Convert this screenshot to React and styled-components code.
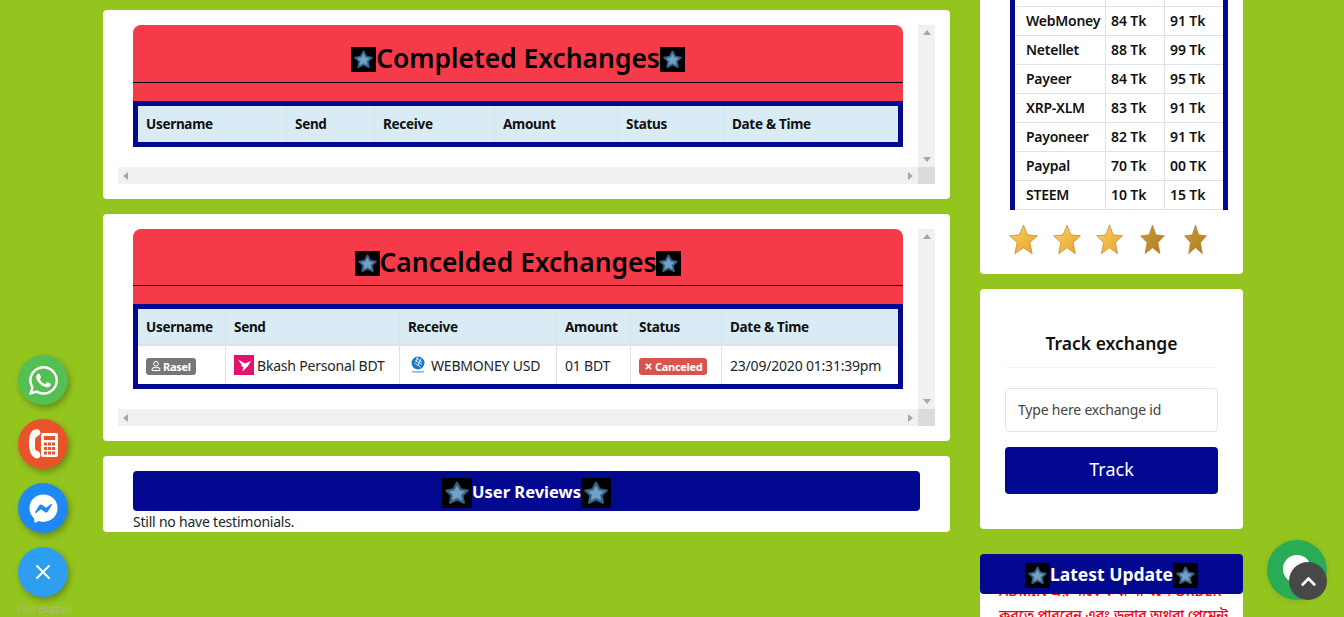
import React, { useId } from "react";
import styled, { createGlobalStyle } from "styled-components";
import { FaWhatsapp, FaFacebookMessenger, FaRegUser, FaTimes, FaChevronUp } from "react-icons/fa";
import { X } from "lucide-react";

const GREEN = "#94c51f";
const NAVY = "#020890";
const RED = "#f53b4a";
const FONT = '"Noto Sans", "Open Sans", sans-serif';

const completedCols = [149, 88, 120, 123, 106, 174];
const canceledCols = [88, 174, 157, 74, 91, 176];
const headings = ["Username", "Send", "Receive", "Amount", "Status", "Date & Time"];

const rates = [
    ["\u00a0", "", ""],
    ["WebMoney", "84 Tk", "91 Tk"],
    ["Netellet", "88 Tk", "99 Tk"],
    ["Payeer", "84 Tk", "95 Tk"],
    ["XRP-XLM", "83 Tk", "91 Tk"],
    ["Payoneer", "82 Tk", "91 Tk"],
    ["Paypal", "70 Tk", "00 TK"],
    ["STEEM", "10 Tk", "15 Tk"],
];

const STAR = "50,8 64,35 94,40 72,60 78,90 50,76 22,90 28,60 6,40 36,35";

function GlowStar({ size }) {
    return (
        <StarBox $size={size} viewBox="0 0 100 100">
            <polygon points={STAR} fill="#3f7199" stroke="#336186" strokeWidth="10" strokeLinejoin="round" />
            <polygon points={STAR} fill="#76a0c2" stroke="#5f8eb2" strokeWidth="4" strokeLinejoin="round" transform="translate(13 14) scale(.74)" />
        </StarBox>
    );
}

function GoldStar({ width, dark }) {
    const id = useId();
    return (
        <svg width={width} height="31" viewBox="0 0 100 100" preserveAspectRatio="none">
            <defs>
                <linearGradient id={id} x1="0" y1="0" x2="1" y2="1">
                    <stop offset="0" stopColor={dark ? "#c79a3a" : "#f8d071"} />
                    <stop offset="1" stopColor={dark ? "#b07f1c" : "#eaa31c"} />
                </linearGradient>
            </defs>
            <polygon points="50,3 64,35 98,38 72,60 80,96 50,77 20,96 28,60 2,38 36,35" fill={`url(#${id})`} stroke="#a9782a" strokeWidth="2" strokeLinejoin="round" />
        </svg>
    );
}

function Bkash() {
    return (
        <BrandIcon viewBox="0 0 20 20">
            <rect width="20" height="20" fill="#e2136e" />
            <path d="M4 4.5l7 4 6-2.5-3 5-5.5 5.5.8-4.5-3-1.5 2 .2z" fill="#fff" />
        </BrandIcon>
    );
}

function WebMoney() {
    return (
        <BrandIcon viewBox="0 0 20 20">
            <circle cx="10" cy="8" r="6.5" fill="#1a78c2" />
            <path d="M8 3l6 4M7 5.5l7 4M6.5 8l6 4M10 2l-2 5M13 3.5l-3 7" stroke="#fff" strokeWidth=".8" />
            <rect x="4" y="16" width="12" height="1.6" fill="#8cb6d8" />
        </BrandIcon>
    );
}

function PhoneDesk() {
    return (
        <svg width="32" height="32" viewBox="0 0 32 32">
            <path d="M7 2c-3 1-5 5-5 13s2 13 6 15c2 1 4 0 5-1 1-2 0-5-2-6-2 0-3-1-3-4V12c0-2 1-3 3-4 2-1 3-3 2-5-1-2-4-2-6-1z" fill="#fff" />
            <rect x="14" y="5" width="17" height="24" rx="2" fill="#fff" />
            <rect x="17" y="8" width="11" height="4" fill="#e9532a" />
            <g fill="#e9532a">
                <rect x="17" y="14.5" width="3" height="3" />
                <rect x="21" y="14.5" width="3" height="3" />
                <rect x="25" y="14.5" width="3" height="3" />
                <rect x="17" y="19" width="3" height="3" />
                <rect x="21" y="19" width="3" height="3" />
                <rect x="25" y="19" width="3" height="3" />
                <rect x="17" y="23.5" width="3" height="3" />
                <rect x="21" y="23.5" width="3" height="3" />
                <rect x="25" y="23.5" width="3" height="3" />
            </g>
        </svg>
    );
}

function ExchangePanel({ title, cols, titleHeight, headHeight, children }) {
    return (
        <ScrollArea>
            <ScrollContent>
                <RedPanel>
                    <PanelTitle $h={titleHeight}>
                        <GlowStar size={25} />
                        {title}
                        <GlowStar size={25} />
                    </PanelTitle>
                </RedPanel>
                <ExchangeTable>
                    <colgroup>
                        {cols.map((w, i) => (
                            <col key={i} style={{ width: w }} />
                        ))}
                    </colgroup>
                    <thead>
                        <tr>
                            {headings.map((h) => (
                                <HeadCell key={h} $h={headHeight} $ruled={Boolean(children)}>
                                    {h}
                                </HeadCell>
                            ))}
                        </tr>
                    </thead>
                    {children && <tbody>{children}</tbody>}
                </ExchangeTable>
            </ScrollContent>
            <VBar>
                <Arrow $dir="up" />
                <Arrow $dir="down" />
            </VBar>
            <HBar>
                <Arrow $dir="left" />
                <Arrow $dir="right" />
            </HBar>
            <Corner />
        </ScrollArea>
    );
}

export default function App() {
    return (
        <Page>
            <GlobalStyle />
            <MainColumn>
                <Card>
                    <ExchangePanel title="Completed Exchanges" cols={completedCols} titleHeight={58} headHeight={36} />
                </Card>
                <Card>
                    <ExchangePanel title="Cancelded Exchanges" cols={canceledCols} titleHeight={57} headHeight={37}>
                        <tr>
                            <BodyCell>
                                <Badge $bg="#777">
                                    <FaRegUser size={10} />
                                    Rasel
                                </Badge>
                            </BodyCell>
                            <BodyCell>
                                <Brand>
                                    <Bkash />
                                    Bkash Personal BDT
                                </Brand>
                            </BodyCell>
                            <BodyCell>
                                <Brand>
                                    <WebMoney />
                                    WEBMONEY USD
                                </Brand>
                            </BodyCell>
                            <BodyCell>01 BDT</BodyCell>
                            <BodyCell>
                                <Badge $bg="#d9534f">
                                    <FaTimes size={9} />
                                    Canceled
                                </Badge>
                            </BodyCell>
                            <BodyCell>23/09/2020 01:31:39pm</BodyCell>
                        </tr>
                    </ExchangePanel>
                </Card>
                <ReviewCard>
                    <NavyTitle>
                        <GlowStar size={30} />
                        User Reviews
                        <GlowStar size={30} />
                    </NavyTitle>
                    <NoReviews>Still no have testimonials.</NoReviews>
                </ReviewCard>
            </MainColumn>

            <SideColumn>
                <RatesCard>
                    <RatesTable>
                        <colgroup>
                            <col style={{ width: 91 }} />
                            <col style={{ width: 59 }} />
                            <col style={{ width: 58 }} />
                        </colgroup>
                        <tbody>
                            {rates.map((r, i) => (
                                <tr key={i}>
                                    <RateName>{r[0]}</RateName>
                                    <RateCell>{r[1]}</RateCell>
                                    <RateCell>{r[2]}</RateCell>
                                </tr>
                            ))}
                        </tbody>
                    </RatesTable>
                    <GoldRow>
                        <GoldCell><GoldStar width={29} /></GoldCell>
                        <GoldCell><GoldStar width={28} /></GoldCell>
                        <GoldCell><GoldStar width={27} /></GoldCell>
                        <GoldCell><GoldStar width={25} dark /></GoldCell>
                        <GoldCell><GoldStar width={23} dark /></GoldCell>
                    </GoldRow>
                </RatesCard>

                <TrackCard>
                    <TrackTitle>Track exchange</TrackTitle>
                    <TrackInput placeholder="Type here exchange id" />
                    <TrackButton>Track</TrackButton>
                </TrackCard>

                <UpdateSection>
                    <UpdateTitle>
                        <GlowStar size={25} />
                        Latest Update
                        <GlowStar size={25} />
                    </UpdateTitle>
                    <UpdateBody>
                        ADMIN এর সাথে কথা না বলে ORDER
                        <br />
                        করতে পারবেন এবং ডলার অথবা পেমেন্ট
                    </UpdateBody>
                </UpdateSection>
            </SideColumn>

            <FloatStack>
                <FloatButton $bg="#56bf54">
                    <FaWhatsapp size={33} />
                </FloatButton>
                <FloatButton $bg="#e9532a">
                    <PhoneDesk />
                </FloatButton>
                <FloatButton $bg="#1e88f5">
                    <FaFacebookMessenger size={29} />
                </FloatButton>
                <FloatButton $bg="#2e9ff0">
                    <X size={24} strokeWidth={2} />
                </FloatButton>
                <GetButton>Get Button</GetButton>
            </FloatStack>

            <ChatBubble />
            <ScrollTop>
                <FaChevronUp size={17} />
            </ScrollTop>
        </Page>
    );
}

const GlobalStyle = createGlobalStyle`
    html, body {
        margin: 0;
        height: 100%;
        overflow: hidden;
        background: ${GREEN};
    }
    * {
        box-sizing: border-box;
    }
`;
const Page = styled.div`
    display: flex;
    align-items: flex-start;
    gap: 30px;
    height: 617px;
    padding-left: 103px;
    overflow: hidden;
    font-family: ${FONT};
    font-size: 14px;
    color: #212529;
`;
const MainColumn = styled.div`
    display: flex;
    flex-direction: column;
    gap: 15px;
    width: 847px;
    padding-top: 10px;
`;
const SideColumn = styled.div`
    display: flex;
    flex-direction: column;
    width: 263px;
`;
const Card = styled.div`
    padding: 15px;
    background: #fff;
    border-radius: 4px;
`;
const ScrollArea = styled.div`
    display: grid;
    grid-template-columns: 800px 17px;
    grid-template-rows: auto 17px;
`;
const ScrollContent = styled.div`
    padding: 0 15px 20px;
`;
const VBar = styled.div`
    display: flex;
    flex-direction: column;
    justify-content: space-between;
    align-items: center;
    padding: 5px 0;
    background: #f1f1f1;
`;
const HBar = styled.div`
    display: flex;
    justify-content: space-between;
    align-items: center;
    padding: 0 5px;
    background: #f1f1f1;
`;
const Corner = styled.div`
    background: #dcdcdc;
`;
const arrowBorders = {
    up: "border-width: 0 4px 5px; border-color: transparent transparent #a8a8a8;",
    down: "border-width: 5px 4px 0; border-color: #a8a8a8 transparent transparent;",
    left: "border-width: 4px 5px 4px 0; border-color: transparent #a8a8a8 transparent transparent;",
    right: "border-width: 4px 0 4px 5px; border-color: transparent transparent transparent #a8a8a8;",
};
const Arrow = styled.span`
    width: 0;
    height: 0;
    border-style: solid;
    ${(props) => arrowBorders[props.$dir]}
`;
const RedPanel = styled.div`
    padding-bottom: 18px;
    background: ${RED};
    border-radius: 8px 8px 0 0;
`;
const PanelTitle = styled.h2`
    display: flex;
    justify-content: center;
    align-items: center;
    height: ${(props) => props.$h}px;
    margin: 0;
    padding-top: 9px;
    border-bottom: 1px solid #000;
    font-size: 26.4px;
    font-weight: 600;
    color: #000;
`;
const StarBox = styled.svg`
    flex: none;
    width: ${(props) => props.$size}px;
    height: ${(props) => props.$size}px;
    margin-top: 3px;
    padding: 3px;
    background: #000;
    polygon {
        filter: blur(1px);
    }
    polygon + polygon {
        filter: blur(0.6px);
    }
`;
const ExchangeTable = styled.table`
    width: 770px;
    table-layout: fixed;
    border-collapse: separate;
    border-spacing: 0;
    border: 5px solid ${NAVY};
    background: #fff;
`;
const HeadCell = styled.th`
    height: ${(props) => props.$h}px;
    padding: 0 8px;
    background: #d9ebf5;
    border-right: 1px solid #dee2e6;
    border-bottom: ${(props) => (props.$ruled ? "2px solid #dee2e6" : "none")};
    font-size: 13.5px;
    font-weight: 700;
    letter-spacing: -0.3px;
    text-align: left;
    color: #111;
    white-space: nowrap;
    &:last-child {
        border-right: none;
    }
`;
const BodyCell = styled.td`
    height: 38px;
    padding: 0 8px;
    border-right: 1px solid #dee2e6;
    font-size: 14px;
    letter-spacing: -0.2px;
    white-space: nowrap;
    &:last-child {
        border-right: none;
    }
`;
const Badge = styled.span`
    display: inline-flex;
    align-items: center;
    gap: 2px;
    padding: 0 5px;
    height: 17px;
    background: ${(props) => props.$bg};
    border-radius: 3px;
    font-size: 11px;
    font-weight: 700;
    letter-spacing: -0.3px;
    color: #fff;
    vertical-align: middle;
`;
const Brand = styled.span`
    display: flex;
    align-items: center;
    gap: 3px;
`;
const BrandIcon = styled.svg`
    flex: none;
    width: 20px;
    height: 20px;
`;
const ReviewCard = styled.div`
    padding: 15px 30px 0;
    height: 76px;
    background: #fff;
    border-radius: 4px;
`;
const NavyTitle = styled.h3`
    display: flex;
    justify-content: center;
    align-items: center;
    height: 40px;
    margin: 0;
    background: ${NAVY};
    border-radius: 4px;
    font-size: 16.5px;
    font-weight: 700;
    color: #fff;
`;
const NoReviews = styled.p`
    margin: 0;
    font-size: 14px;
    letter-spacing: -0.22px;
    line-height: 21px;
`;
const RatesCard = styled.div`
    display: flex;
    flex-direction: column;
    justify-content: flex-end;
    height: 274px;
    padding-bottom: 19px;
    overflow: hidden;
    background: #fff;
    border-radius: 0 0 4px 4px;
`;
const RatesTable = styled.table`
    flex: none;
    width: 218px;
    margin-left: 30px;
    table-layout: fixed;
    border-collapse: separate;
    border-spacing: 0;
    border-left: 5px solid ${NAVY};
    border-right: 5px solid ${NAVY};
`;
const RateCell = styled.td`
    height: 29px;
    padding: 0 5px 1px;
    border-right: 1px solid #dee2e6;
    border-bottom: 1px solid #dee2e6;
    font-size: 14px;
    font-weight: 600;
    letter-spacing: -0.1px;
    color: #111;
    white-space: nowrap;
    &:last-child {
        border-right: none;
    }
`;
const RateName = styled(RateCell)`
    padding: 0 0 1px 11px;
    letter-spacing: -0.25px;
`;
const GoldRow = styled.div`
    display: flex;
    flex: none;
    width: 215px;
    margin: 14px 0 0 22px;
`;
const GoldCell = styled.div`
    display: flex;
    flex: 1;
    justify-content: center;
`;
const TrackCard = styled.div`
    display: flex;
    flex-direction: column;
    height: 240px;
    margin-top: 15px;
    padding: 40px 25px 0;
    background: #fff;
    border-radius: 4px;
`;
const TrackTitle = styled.h4`
    height: 39px;
    margin: 0 0 20px;
    border-bottom: 1px solid #f1f1f1;
    border-radius: 4px;
    font-size: 17.5px;
    font-weight: 600;
    line-height: 28px;
    text-align: center;
    color: #111;
`;
const TrackInput = styled.input`
    height: 44px;
    padding: 0 12px 2px;
    border: 1px solid #e4e4e7;
    border-radius: 4px;
    font-family: ${FONT};
    font-size: 14px;
    letter-spacing: -0.2px;
    outline: none;
    &::placeholder {
        color: #444;
        opacity: 1;
    }
`;
const TrackButton = styled.button`
    height: 47px;
    margin-top: 15px;
    padding: 0 0 4px;
    background: ${NAVY};
    border: none;
    border-radius: 4px;
    font-family: ${FONT};
    font-size: 18px;
    color: #fff;
`;
const UpdateSection = styled.div`
    margin-top: 25px;
`;
const UpdateTitle = styled.h3`
    position: relative;
    z-index: 1;
    display: flex;
    justify-content: center;
    align-items: center;
    height: 40px;
    margin: 0;
    padding-bottom: 1px;
    background: ${NAVY};
    border-radius: 4px;
    font-size: 17.5px;
    font-weight: 700;
    color: #fff;
`;
const UpdateBody = styled.div`
    height: 40px;
    margin-top: -13px;
    padding-left: 19px;
    background: #fff;
    font-family: "Noto Sans Bengali", ${FONT};
    font-size: 14px;
    font-weight: 500;
    line-height: 24px;
    color: #f5000f;
    white-space: nowrap;
    overflow: hidden;
`;
const FloatStack = styled.div`
    position: fixed;
    left: 18px;
    top: 355px;
    display: flex;
    flex-direction: column;
    gap: 14px;
    width: 50px;
`;
const FloatButton = styled.div`
    display: flex;
    justify-content: center;
    align-items: center;
    width: 50px;
    height: 50px;
    background: ${(props) => props.$bg};
    border-radius: 50%;
    box-shadow: 2px 3px 6px rgba(0, 0, 0, 0.3);
    color: #fff;
`;
const GetButton = styled.div`
    margin: -9px -11px 0 -9px;
    font-family: "Liberation Sans", Arial, sans-serif;
    font-size: 11px;
    line-height: 14px;
    text-align: center;
    white-space: nowrap;
    color: #aeb78f;
`;
const ChatBubble = styled.div`
    position: fixed;
    left: 1267px;
    top: 540px;
    width: 60px;
    height: 60px;
    background: #2aab55;
    border-radius: 50%;
    box-shadow: 0 1px 6px rgba(0, 0, 0, 0.12);
    &::after {
        content: "";
        position: absolute;
        left: 16px;
        top: 15px;
        width: 28px;
        height: 28px;
        background: #fff;
        border-radius: 50%;
    }
`;
const ScrollTop = styled.div`
    position: fixed;
    left: 1289px;
    top: 562px;
    display: flex;
    justify-content: center;
    align-items: center;
    width: 38px;
    height: 38px;
    background: #484848;
    border-radius: 50%;
    color: #fff;
`;
